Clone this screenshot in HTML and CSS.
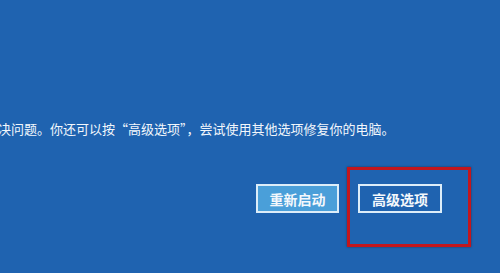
FILE: index.html
```html
<!DOCTYPE html>
<html lang="zh-CN">
<head>
    <meta charset="UTF-8">
    <meta name="viewport" content="width=device-width, initial-scale=1.0">
    <title>自动修复</title>
    <link rel="stylesheet" href="styles.css">
</head>
<body>
    <div class="screen">
        <p class="message">决问题。你还可以按“高级选项”，尝试使用其他选项修复你的电脑。</p>

        <div class="actions">
            <button class="btn btn-primary" type="button">重新启动</button>
            <button class="btn btn-outline" type="button">高级选项</button>
        </div>
    </div>

    <!-- red marker drawn over the screenshot -->
    <div class="highlight"></div>
</body>
</html>
```

FILE: styles.css
```css
html, body {
    margin: 0;
    padding: 0;
    height: 100%;
}
body {
    background-color: #1f63b0;
    font-family: "Noto Sans CJK SC", "Noto Sans", sans-serif;
    color: #f2f7fc;
    overflow: hidden;
    position: relative;
}
.screen {
    padding-top: 120px;
}
.message {
    margin: 0 0 0 -2px;
    font-size: 13px;
    line-height: 18px;
    white-space: nowrap;
}
.actions {
    display: flex;
    gap: 19px;
    padding-left: 256px;
    margin-top: 46px;
}
.btn {
    height: 29px;
    border: 2px solid #dcedf9;
    color: #f4f8fc;
    font-family: inherit;
    font-size: 14px;
    font-weight: bold;
    padding: 0;
    cursor: pointer;
}
.btn-primary {
    width: 83px;
    background-color: #4a9fd9;
}
.btn-outline {
    width: 84px;
    background-color: #1f63b0;
}
.highlight {
    position: absolute;
    left: 347px;
    top: 167px;
    width: 118px;
    height: 74px;
    border: 3px solid #c3161d;
    box-shadow: 0 0 2px rgba(40, 0, 0, 0.5);
}
```
